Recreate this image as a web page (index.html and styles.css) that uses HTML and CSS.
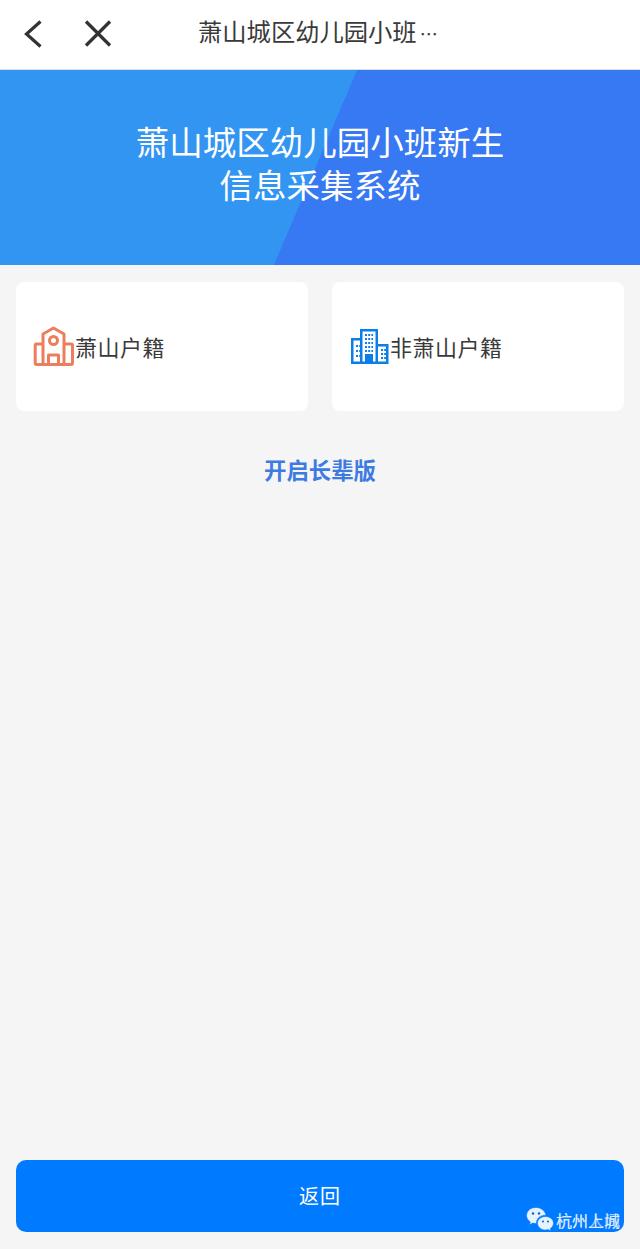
FILE: index.html
```html
<!DOCTYPE html>
<html lang="zh-CN">
<head>
    <meta charset="UTF-8">
    <meta name="viewport" content="width=device-width, initial-scale=1.0">
    <title>萧山城区幼儿园小班新生信息采集系统</title>
    <link rel="stylesheet" href="styles.css">
</head>
<body>

    <div class="page">
        <!-- Top bar -->
        <header class="topbar">
            <svg class="icon-back" width="24" height="32" viewBox="0 0 24 32">
                <path d="M19.5 2.5 L5.5 15 L19.5 27.5" />
            </svg>
            <svg class="icon-close" width="30" height="30" viewBox="0 0 30 30">
                <path d="M3 1.5 L27 25.5 M27 1.5 L3 25.5" />
            </svg>
            <div class="topbar-title">萧山城区幼儿园小班<span class="dots">…</span></div>
        </header>

        <!-- Banner -->
        <section class="banner">
            <h1>萧山城区幼儿园小班新生<br>信息采集系统</h1>
        </section>

        <!-- Household options -->
        <div class="options">
            <div class="option">
                <svg class="option-icon" width="42" height="42" viewBox="0 0 42 42">
                    <g class="school">
                        <path d="M10 38.5 V8 L20.5 2 L31 8 V38.5" />
                        <path d="M10 18 H3.5 Q2.2 18 2.2 19.5 V37 Q2.2 38.5 3.5 38.5 H38 Q39.5 38.5 39.5 37 V19.5 Q39.5 18 38 18 H31" />
                        <circle cx="20.5" cy="14.5" r="4" />
                        <path d="M15.5 38.5 V29 H25.5 V38.5" />
                    </g>
                </svg>
                <span>萧山户籍</span>
            </div>
            <div class="option">
                <svg class="option-icon" width="41" height="36" viewBox="-2 0 41 36">
                    <path class="tower" d="M0 35 V9 H9 V0 H27 V15 H37.5 V35 Z" />
                    <g class="tower-cut">
                        <path d="M11.5 2.5 H24.5 V32.5 H22 V25 H14 V32.5 H11.5 Z" />
                        <path d="M2.5 11.5 H9 V32.5 H2.5 Z" />
                        <path d="M27 17.5 H35 V32.5 H27 Z" />
                    </g>
                    <g class="tower-marks">
                        <path d="M14 6 H22 M14 10 H22 M14 14 H22 M14 18 H22 M14 22 H22" />
                        <path d="M5 17 H9 M5 22 H9 M5 27 H9" />
                        <path d="M30 21 H35 M30 25 H35 M30 29 H35" />
                    </g>
                </svg>
                <span>非萧山户籍</span>
            </div>
        </div>

        <a class="elder-link">开启长辈版</a>

        <button class="back-btn">返回</button>

        <!-- Watermark -->
        <div class="watermark">
            <svg width="28" height="25" viewBox="0 0 28 25">
                <path class="bubble-a" d="M10 0.5 C4.7 0.5 0.5 4 0.5 8.6 C0.5 11.2 2 13.4 4.3 14.9 L3.4 17.8 L6.8 16.1 C8 16.4 9.2 16.6 10.5 16.5 C10.1 11.5 14.5 7.8 20 8.2 C19 3.7 14.9 0.5 10 0.5 Z" />
                <path class="bubble-b" d="M19.5 9.5 C15 9.5 11.5 12.5 11.5 16.2 C11.5 20 15 23 19.5 23 C20.5 23 21.4 22.8 22.2 22.6 L25 24 L24.3 21.5 C26.3 20.2 27.5 18.3 27.5 16.2 C27.5 12.5 24 9.5 19.5 9.5 Z" />
                <circle class="eye" cx="7" cy="6.5" r="1.2" />
                <circle class="eye" cx="13" cy="6.5" r="1.2" />
                <circle class="eye" cx="17" cy="14.5" r="1" />
                <circle class="eye" cx="22" cy="14.5" r="1" />
            </svg>
            <span class="wm-text">
                <span>杭州上城</span>
                <span class="wm-over">杭州人间</span>
            </span>
        </div>
    </div>

</body>
</html>
```

FILE: styles.css
```css
/* Global Styles */
body {
    font-family: "Noto Sans CJK SC", "Noto Sans", sans-serif;
    margin: 0;
    padding: 0;
    background: #f5f5f6;
    color: #333;
}

.page {
    position: relative;
    display: flex;
    flex-direction: column;
    height: 1249px;
    overflow: hidden;
}

/* Top bar */
.topbar {
    position: relative;
    display: flex;
    align-items: center;
    height: 69px;
    padding-left: 21px;
    background: #fff;
    border-bottom: 1px solid #d5dfe6;
}

.topbar svg {
    fill: none;
    stroke: #333;
    stroke-width: 3.2;
}

.icon-back {
    margin-right: 38px;
}

.topbar-title {
    position: absolute;
    left: 198px;
    top: 12px;
    font-size: 24.3px;
    line-height: 38px;
    color: #3a3a3a;
    white-space: nowrap;
}

.topbar-title .dots {
    font-size: 18px;
    margin-left: 3px;
}

/* Banner */
.banner {
    position: relative;
    display: flex;
    align-items: center;
    justify-content: center;
    height: 183px;
    padding-bottom: 12px;
    background: #3395f2;
}

.banner::before {
    content: "";
    position: absolute;
    inset: 0;
    background: #3778f3;
    clip-path: polygon(55.8% 0, 100% 0, 100% 100%, 42.8% 100%);
}

.banner h1 {
    position: relative;
    margin: 0;
    font-size: 33.5px;
    font-weight: 400;
    line-height: 43px;
    color: #fff;
    text-align: center;
}

/* Options */
.options {
    display: flex;
    gap: 24px;
    padding: 17px 16px 0;
}

.option {
    flex: 1;
    display: flex;
    align-items: center;
    height: 129px;
    padding-left: 17px;
    background: #fff;
    border-radius: 8px;
    font-size: 22px;
    letter-spacing: 0.5px;
    color: #3a3a3a;
}

.option span {
    margin-bottom: 1px;
}

.option-icon {
    flex: none;
}

.school path,
.school circle {
    fill: none;
    stroke: #ec7e5d;
    stroke-width: 3;
    stroke-linejoin: round;
}

.tower {
    fill: #0c7ee8;
}

.tower-cut path {
    fill: #fff;
}

.tower-marks path {
    fill: none;
    stroke: #0c7ee8;
    stroke-width: 2;
    stroke-dasharray: 2 1.2;
}

/* Elder mode link */
.elder-link {
    margin-top: 41px;
    font-size: 22.4px;
    font-weight: 700;
    line-height: 34px;
    color: #3d7be0;
    text-align: center;
}

/* Back button */
.back-btn {
    margin: auto 16px 17px;
    height: 72px;
    padding: 0 0 2px;
    border: none;
    border-radius: 10px;
    background: #007aff;
    color: #fff;
    font-family: inherit;
    font-size: 20px;
    letter-spacing: 1px;
}

/* Watermark */
.watermark {
    position: absolute;
    left: 526px;
    top: 1207px;
    display: flex;
    align-items: center;
    gap: 2px;
    color: #fff;
}

.bubble-a,
.bubble-b {
    fill: #e6f3ff;
    stroke: #007aff;
    stroke-width: 0.6;
}

.eye {
    fill: #0a62c4;
}

.wm-text {
    position: relative;
    font-size: 16px;
    line-height: 24px;
    white-space: nowrap;
    opacity: 0.85;
}

.wm-over {
    position: absolute;
    left: 0;
    top: 0;
    opacity: 0.75;
}
```
